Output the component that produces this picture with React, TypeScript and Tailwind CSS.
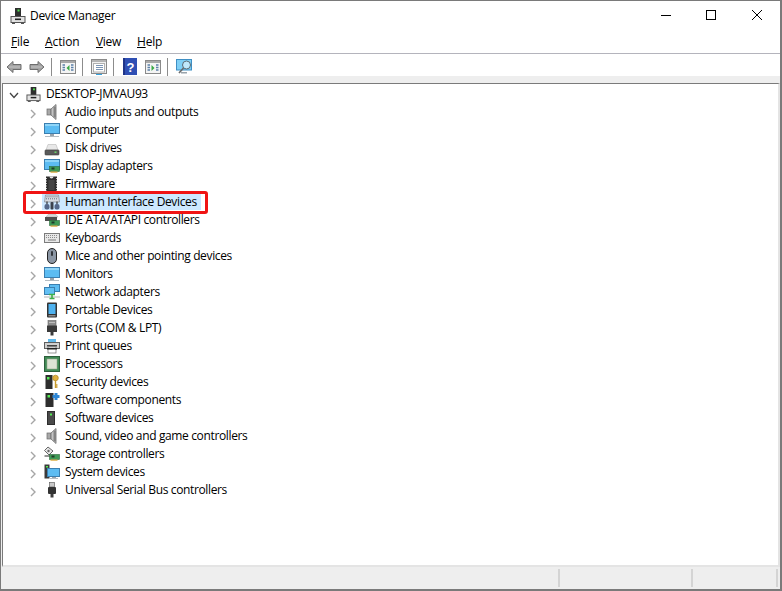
import type { ReactNode } from "react"

const Svg = ({ children, size = 16 }: { children: ReactNode; size?: number }) => (
  <svg width={size} height={size} viewBox="0 0 16 16" className="shrink-0">
    {children}
  </svg>
)

// tower with a green led on a base, used for the root and the title bar
const ComputerTower = () => (
  <>
    <rect x="5" y="0" width="6" height="9" fill="#2e2e2e" />
    <rect x="7.5" y="1.5" width="2" height="2" fill="#4fe04f" />
    <rect x="1" y="8.5" width="14" height="6" fill="#e2e2e2" stroke="#555" />
    <rect x="5" y="10.5" width="6" height="1.6" fill="#222" />
    <rect x="2" y="15" width="3" height="1" fill="#555" />
    <rect x="11" y="15" width="3" height="1" fill="#555" />
  </>
)

const Speaker = () => (
  <>
    <rect x="3" y="5" width="4" height="6" fill="#a8a8a8" stroke="#6a6a6a" strokeWidth="0.7" />
    <path d="M7 5 L12 0.5 V15.5 L7 11 Z" fill="#c4c4c4" stroke="#6a6a6a" strokeWidth="0.8" />
    <rect x="9.5" y="2.5" width="2.5" height="11" fill="#848484" />
  </>
)

const Monitor = ({ stand = true }: { stand?: boolean }) => (
  <>
    <rect x="0.5" y="1.5" width="15" height="10" fill="#5cbcf2" stroke="#3b7fb0" />
    <rect x="1" y="2" width="14" height="2" fill="#8fd5f8" />
    {stand && <rect x="6" y="12" width="4" height="2" fill="#9aa4ac" />}
    {stand && <rect x="1" y="14" width="14" height="1" fill="#b4bcc2" />}
  </>
)

const Card = ({ x = 5, y = 9 }: { x?: number; y?: number }) => (
  <>
    <rect x={x} y={y} width="10" height="5" fill="#3f9a55" stroke="#2c6a3b" strokeWidth="0.6" />
    <rect x={x + 2} y={y + 1} width="3" height="2" fill="#1f3d28" />
    <rect x={x + 1} y={y + 5} width="7" height="1.2" fill="#d9a93a" />
  </>
)

const Tower = () => (
  <>
    <rect x="3" y="1" width="8" height="14" fill="#2e2e2e" />
    <rect x="4" y="2" width="6" height="12" fill="#4a4a4a" />
    <rect x="6" y="3.5" width="2" height="2" fill="#55ea55" />
  </>
)

const icons: Record<string, ReactNode> = {
  audio: <Speaker />,
  computer: <Monitor />,
  disk: (
    <>
      <path d="M2 10 L4 4.5 H12 L14 10 Z" fill="#e8e8e8" stroke="#b8b8b8" strokeWidth="0.6" />
      <rect x="1" y="10" width="14" height="5" rx="0.8" fill="#5a5a5a" stroke="#3e3e3e" strokeWidth="0.6" />
      <rect x="10.5" y="11.5" width="2" height="1.4" fill="#6be06b" />
    </>
  ),
  display: (
    <>
      <Monitor stand={false} />
      <Card x={5.5} y={8.5} />
    </>
  ),
  firmware: (
    <>
      <rect x="2" y="0.5" width="11" height="15" fill="#2e2e2e" />
      <path d="M5.5 0.5 a2 2 0 0 0 4 0 Z" fill="#e4e4e4" />
      <path d="M2.5 2V15M12.5 2V15" stroke="#c8c8c8" strokeWidth="1" strokeDasharray="1 1.5" />
      <rect x="4.5" y="4" width="6" height="10" fill="#444" />
    </>
  ),
  hid: (
    <>
      <path d="M1.5 1 H14.5 L15.5 8 H0.5 Z" fill="#d6dbe1" stroke="#808791" strokeWidth="0.7" />
      <path d="M2.5 2.8H13.5M2 4.8H14" stroke="#66707c" strokeWidth="1" strokeDasharray="1 1" />
      <rect x="0.5" y="10" width="5" height="5.5" rx="2" fill="#54688a" />
      <rect x="10.5" y="10" width="5" height="5.5" rx="2" fill="#54688a" />
      <path d="M3 10 V7.5 M13 10 V7.5" stroke="#333" strokeWidth="1.2" />
      <rect x="6.5" y="8" width="3" height="7.5" rx="1" fill="#3c424c" />
    </>
  ),
  ide: (
    <>
      <path d="M2 5 L4 2.5 H12 L14 5 Z" fill="#d8d8d8" stroke="#aaa" strokeWidth="0.5" />
      <rect x="1" y="5" width="12" height="4" fill="#4e4e4e" />
      <Card x={5.5} y={8.5} />
    </>
  ),
  keyboard: (
    <>
      <rect x="0.5" y="3.5" width="15" height="9" fill="#e8e8e8" stroke="#7c7c7c" />
      <path d="M2 5.5H14M2 7.5H14" stroke="#8c8c8c" strokeWidth="1" strokeDasharray="1 1" />
      <path d="M4 10H12" stroke="#8c8c8c" strokeWidth="1.2" />
    </>
  ),
  mouse: (
    <>
      <rect x="3.5" y="0.5" width="9" height="15" rx="4.5" fill="#8b96a4" stroke="#222" />
      <rect x="7" y="3" width="2" height="5" rx="1" fill="#30343a" />
    </>
  ),
  monitor: <Monitor />,
  network: (
    <>
      <rect x="5.5" y="0.5" width="10" height="7" fill="#5cbcf2" stroke="#3b7fb0" />
      <rect x="0.5" y="3.5" width="10" height="7" fill="#62c0f4" stroke="#3b7fb0" />
      <rect x="0" y="12" width="16" height="2" fill="#d8d8d8" />
      <path d="M5 10.5 H11 M8 10 V14 M5.5 14.5 H10.5" stroke="#3fae4b" strokeWidth="1.6" />
    </>
  ),
  portable: (
    <>
      <rect x="3" y="0.5" width="10" height="15" rx="1" fill="#333" />
      <rect x="4.5" y="2" width="7" height="10" fill="#4fb2ef" />
      <rect x="4.5" y="13" width="7" height="1.5" fill="#8a8a8a" />
    </>
  ),
  ports: (
    <>
      <rect x="4" y="0.5" width="8" height="5" fill="#8d8d8d" stroke="#666" strokeWidth="0.6" />
      <path d="M5.5 2.5H10.5" stroke="#eee" strokeWidth="1" strokeDasharray="1 1" />
      <rect x="3" y="5.5" width="10" height="6.5" fill="#3a3a3a" />
      <rect x="6.5" y="12" width="3" height="3.5" fill="#3a3a3a" />
    </>
  ),
  print: (
    <>
      <rect x="4" y="1" width="8" height="4" fill="#5fb8ea" />
      <rect x="0.5" y="4.5" width="15" height="6" fill="#d0d0d0" stroke="#5e5e5e" />
      <rect x="3" y="7" width="10" height="1.5" fill="#444" />
      <rect x="4" y="9" width="8" height="6" fill="#fff" stroke="#6a6a6a" strokeWidth="0.7" />
      <rect x="3" y="10" width="10" height="1.5" fill="#222" />
    </>
  ),
  processor: (
    <>
      <rect x="0.5" y="0.5" width="15" height="15" fill="#3f8a55" stroke="#2d5f3b" />
      <rect x="3" y="3" width="10" height="10" fill="#dde4d5" stroke="#9aaa90" strokeWidth="0.6" />
    </>
  ),
  security: (
    <>
      <rect x="1.5" y="1" width="7" height="14" fill="#2e2e2e" />
      <rect x="3" y="3" width="2.5" height="2.5" fill="#55ea55" />
      <circle cx="11.5" cy="4" r="2.8" fill="#e0b040" stroke="#b08420" strokeWidth="0.7" />
      <path d="M11.5 6 V14 M11.5 11H13.5M11.5 13H13.5" stroke="#c89a2c" strokeWidth="1.4" />
    </>
  ),
  components: (
    <>
      <rect x="1.5" y="1" width="8" height="14" fill="#2e2e2e" />
      <rect x="3.5" y="3" width="2.5" height="2.5" fill="#55ea55" />
      <path d="M12 1 V8 M8.5 4.5 H15.5" stroke="#2e86d4" strokeWidth="3" />
    </>
  ),
  softdev: <Tower />,
  sound: <Speaker />,
  storage: (
    <>
      <path d="M4 1 L0.5 4.5 L5 9 L9 5 Z" fill="#e6e6e6" stroke="#444" strokeWidth="0.8" />
      <circle cx="4.5" cy="5" r="1.2" fill="#666" />
      <path d="M0.5 10 H6" stroke="#666" strokeWidth="1.4" />
      <Card x={5.5} y={8.5} />
    </>
  ),
  system: (
    <>
      <rect x="0.5" y="0.5" width="5" height="14" fill="#3a3a3a" />
      <rect x="2" y="2" width="2" height="1.5" fill="#55ea55" />
      <rect x="3.5" y="4.5" width="12" height="8" fill="#5cbcf2" stroke="#3b7fb0" />
      <rect x="8" y="13" width="4" height="1" fill="#9aa4ac" />
      <rect x="6" y="14" width="8" height="1" fill="#b4bcc2" />
    </>
  ),
  usb: (
    <>
      <rect x="5.5" y="0.5" width="5" height="4.5" fill="#c9c9c9" stroke="#666" strokeWidth="0.7" />
      <rect x="4" y="5" width="8" height="7" rx="1" fill="#333" />
      <rect x="6.5" y="12" width="3" height="3.5" fill="#3e3e3e" />
    </>
  ),
}

const devices: [string, string][] = [
  ["audio", "Audio inputs and outputs"],
  ["computer", "Computer"],
  ["disk", "Disk drives"],
  ["display", "Display adapters"],
  ["firmware", "Firmware"],
  ["hid", "Human Interface Devices"],
  ["ide", "IDE ATA/ATAPI controllers"],
  ["keyboard", "Keyboards"],
  ["mouse", "Mice and other pointing devices"],
  ["monitor", "Monitors"],
  ["network", "Network adapters"],
  ["portable", "Portable Devices"],
  ["ports", "Ports (COM & LPT)"],
  ["print", "Print queues"],
  ["processor", "Processors"],
  ["security", "Security devices"],
  ["components", "Software components"],
  ["softdev", "Software devices"],
  ["sound", "Sound, video and game controllers"],
  ["storage", "Storage controllers"],
  ["system", "System devices"],
  ["usb", "Universal Serial Bus controllers"],
]

const Chevron = () => (
  <svg width="7" height="10" viewBox="0 0 7 10" className="mt-[4px] shrink-0">
    <path d="M1 1 L5 5 L1 9" fill="none" stroke="#a6a6a6" strokeWidth="1.4" />
  </svg>
)

const Sep = () => <div className="h-[18px] w-px bg-[#8c8c8c]" />

const Arrow = ({ flip }: { flip?: boolean }) => (
  <svg width="16" height="14" viewBox="0 0 16 14" className={flip ? "-scale-x-100" : ""}>
    <path d="M1 7 L7 1.5 V4.5 H15 V9.5 H7 V12.5 Z" fill="#a4a4a4" stroke="#6e6e6e" />
    <path d="M3 7 H14" stroke="#c4c4c4" strokeWidth="1" />
  </svg>
)

const PaneIcon = ({ side }: { side: "left" | "right" }) => (
  <svg width="16" height="14" viewBox="0 0 16 14">
    <rect x="0.5" y="0.5" width="15" height="13" fill="#f4f4f4" stroke="#8a8a8a" />
    <rect x="1" y="1" width="14" height="2" fill="#a9a9a9" />
    <path d="M2.5 5H5M2.5 7.5H5M2.5 10H5M11 5H13.5M11 7.5H13.5M11 10H13.5" stroke="#5a7fa8" strokeWidth="1.4" />
    <path d={side === "left" ? "M9.5 5 V11 L6.5 8 Z" : "M6.5 5 V11 L9.5 8 Z"} fill="#39a845" />
  </svg>
)

export default function App() {
  return (
    <div
      className="flex h-[591px] w-[782px] flex-col overflow-hidden border-t border-r-2 border-b-2 border-l border-[#7a7a7a] bg-white text-[12px] text-black"
      style={{ fontFamily: '"Open Sans", "Liberation Sans", sans-serif' }}
    >
      {/* Title bar */}
      <div className="flex h-[30px] shrink-0 items-center">
        <div className="ml-[9px] mr-1">
          <Svg>
            <ComputerTower />
          </Svg>
        </div>
        <span className="tracking-[-0.32px]">Device Manager</span>
        <div className="ml-auto flex items-center pb-[2px]">
          <div className="mr-[35px] h-px w-[10px] bg-black" />
          <div className="mr-[36px] h-[10px] w-[10px] border border-black" />
          <svg width="10" height="10" viewBox="0 0 10 10" className="mr-[18px]">
            <path d="M0 0 L10 10 M10 0 L0 10" stroke="#000" strokeWidth="1" />
          </svg>
        </div>
      </div>

      {/* Menu */}
      <div className="flex h-[23px] shrink-0 items-center border-b border-[#b4b4bc] pb-px pl-[10px]">
        <span className="w-[34px] tracking-[-0.2px]">
          <u>F</u>ile
        </span>
        <span className="w-[51px] tracking-[-0.1px]">
          <u>A</u>ction
        </span>
        <span className="w-[41px] tracking-[-0.3px]">
          <u>V</u>iew
        </span>
        <span className="tracking-[-0.2px]">
          <u>H</u>elp
        </span>
      </div>

      {/* Toolbar */}
      <div className="flex h-[22px] shrink-0 items-center pl-[5px] pt-[3px]">
        <Arrow />
        <div className="ml-[7px]">
          <Arrow flip />
        </div>
        <div className="ml-[6px] mr-2">
          <Sep />
        </div>
        <PaneIcon side="left" />
        <div className="ml-[6px] mr-2">
          <Sep />
        </div>
        <svg width="16" height="16" viewBox="0 0 16 16">
          <rect x="0.5" y="0.5" width="15" height="14" fill="#f0f0f0" stroke="#8a8a8a" />
          <rect x="1" y="1" width="14" height="2" fill="#b4b4b4" />
          <rect x="2.5" y="4.5" width="11" height="8.5" fill="#fff" stroke="#b0b0b0" />
          <path d="M5 6.5H12M5 8.5H12M5 10.5H12" stroke="#7a94b4" strokeWidth="1" />
          <rect x="5" y="15" width="6" height="1" fill="#36a3e0" />
        </svg>
        <div className="ml-[6px] mr-[9px]">
          <Sep />
        </div>
        <svg width="14" height="17" viewBox="0 0 14 17">
          <rect width="14" height="17" fill="#2f4fb4" />
          <rect x="0" y="0" width="2" height="17" fill="#1f3488" />
          <text x="7.5" y="13.5" fontSize="13" fontWeight="700" textAnchor="middle" fill="#fff" fontFamily="Liberation Sans">
            ?
          </text>
        </svg>
        <div className="ml-2 mr-[6px]">
          <PaneIcon side="right" />
        </div>
        <Sep />
        <svg width="17" height="16" viewBox="0 0 17 16" className="ml-2">
          <rect x="0.5" y="0.5" width="15" height="10.5" fill="#7fd0f6" stroke="#3f8fc4" />
          <rect x="5" y="13" width="6" height="1.5" fill="#9aa4ac" />
          <circle cx="10.5" cy="6" r="4" fill="#bfe8fb" stroke="#5a6a74" />
          <path d="M7.5 9 L3 14" stroke="#6a6a6a" strokeWidth="1.6" />
        </svg>
      </div>

      {/* Tree pane and status bar sit on the grey client area */}
      <div className="flex min-h-0 flex-1 flex-col bg-[#eeeeee] pt-[7px]">
        <div className="ml-px flex min-h-0 flex-1 flex-col border-t border-l border-r-2 border-b-2 border-t-[#7a7a7a] border-l-[#7a7a7a] border-r-[#e4e4e4] border-b-[#e4e4e4] bg-white pt-[1px]">
          <div className="relative flex-1">
            <div className="flex h-[18px] items-center">
              <svg width="10" height="7" viewBox="0 0 10 7" className="ml-[6px] mr-[7px] mt-[2px]">
                <path d="M1 1 L5 5.5 L9 1" fill="none" stroke="#444" strokeWidth="1.3" />
              </svg>
              <Svg size={15}>
                <ComputerTower />
              </Svg>
              <span className="ml-[5px] tracking-[-0.38px]">DESKTOP-JMVAU93</span>
            </div>
            {devices.map(([icon, name]) => (
              <div key={name} className="flex h-[18px] items-center pl-[27px]">
                <Chevron />
                <div
                  className={
                    name === "Human Interface Devices"
                      ? "ml-[5px] flex h-[16px] w-[159px] items-center bg-[#cce8ff] pl-[2px]"
                      : "ml-[5px] flex h-[16px] items-center pl-[2px]"
                  }
                >
                  <Svg>{icons[icon]}</Svg>
                  <span className="ml-[5px] tracking-[-0.36px]">{name}</span>
                </div>
              </div>
            ))}
            {/* Red annotation over the selected row */}
            <div className="absolute left-[20px] top-[106px] h-[23px] w-[185px] rounded-[3px] border-[3px] border-[#f01414]" />
          </div>
        </div>

        {/* Status bar */}
        <div className="flex h-[22px] shrink-0 items-center py-[2px]">
          <div className="ml-auto mr-px flex h-full">
            <div className="w-[133px] border-l-2 border-[#d4d4d4]" />
            <div className="w-[85px] border-l-2 border-[#d4d4d4]" />
            <div className="w-[3px] border-l-2 border-[#d4d4d4]" />
          </div>
        </div>
      </div>
    </div>
  )
}
